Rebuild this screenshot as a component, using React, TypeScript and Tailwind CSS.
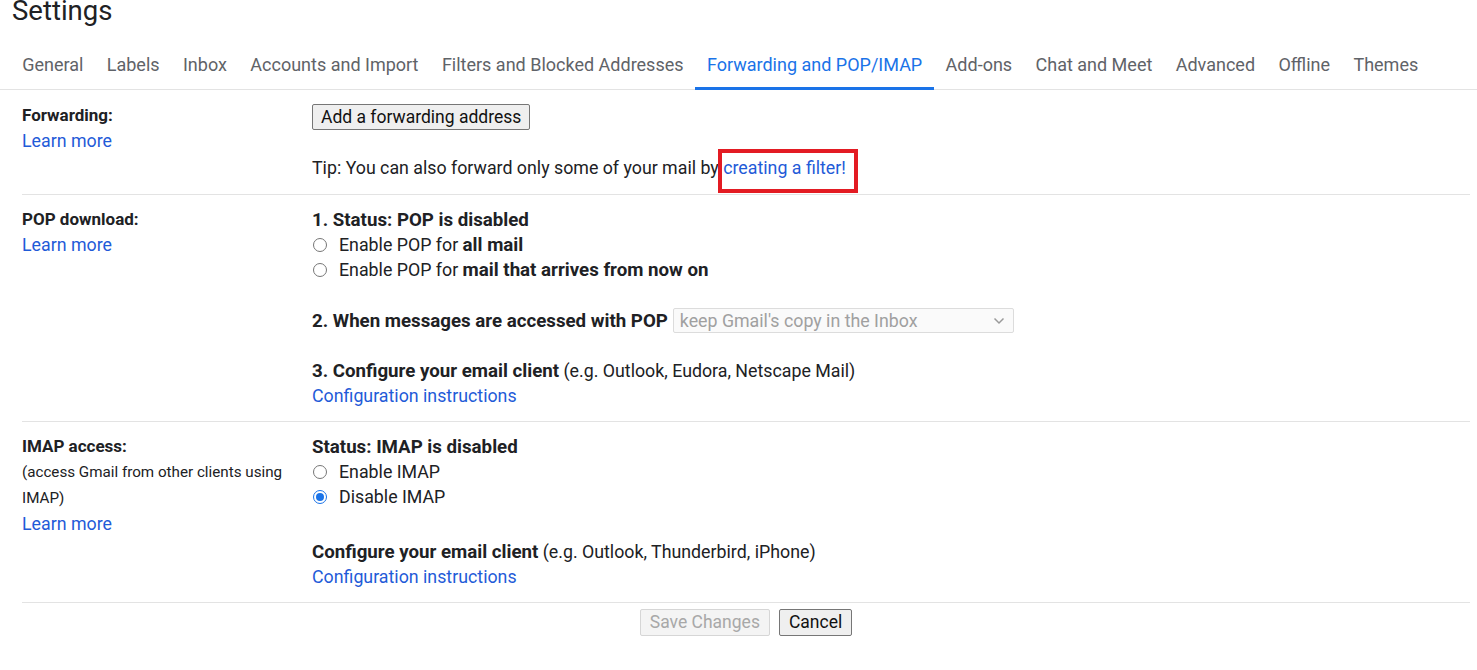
import React from "react";

const tabs = [
  "General",
  "Labels",
  "Inbox",
  "Accounts and Import",
  "Filters and Blocked Addresses",
  "Forwarding and POP/IMAP",
  "Add-ons",
  "Chat and Meet",
  "Advanced",
  "Offline",
  "Themes",
];

const Radio: React.FC<{ checked?: boolean }> = ({ checked }) =>
  checked ? (
    <span className="inline-flex items-center justify-center w-[14px] h-[14px] rounded-full border-[1.5px] border-[#1a73e8] mr-[12px] ml-[1px]">
      <span className="w-[8px] h-[8px] rounded-full bg-[#1a73e8]" />
    </span>
  ) : (
    <span className="inline-block w-[14px] h-[14px] rounded-full border border-[#767676] mr-[12px] ml-[1px]" />
  );

const Link: React.FC<{ children: React.ReactNode }> = ({ children }) => (
  <span className="text-[#1f5bd8] cursor-pointer">{children}</span>
);

// bold text inside the right column is a bit wider than the labels
const B: React.FC<{ children: React.ReactNode }> = ({ children }) => (
  <span className="font-bold text-[18.7px] leading-[18px]">{children}</span>
);

export default function App() {
  return (
    <div className="bg-white text-[#202124] font-['Roboto',sans-serif] text-[17.8px] leading-[25px] w-[1477px]">
      <div className="pl-[12px] text-[27.5px] leading-[21px] text-[#202124]">Settings</div>

      {/* tabs */}
      <div className="mt-[32px] flex pl-[10.5px] border-b border-[#e3e3e3]">
        {tabs.map((t) => {
          const active = t === "Forwarding and POP/IMAP";
          return (
            <div
              key={t}
              className={
                active
                  ? "px-[11.7px] pb-[10px] text-[18px] leading-[24px] text-[#1a73e8] border-b-[3px] border-[#1a73e8] -mb-[1px]"
                  : "px-[11.7px] pb-[10px] text-[18px] leading-[24px] text-[#5f6368] border-b-[3px] border-transparent -mb-[1px]"
              }
            >
              {t}
            </div>
          );
        })}
      </div>

      <div className="ml-[22px] mr-[7px]">
        {/* Forwarding */}
        <div className="flex pt-[13px] pb-[14px] border-b border-[#e3e3e3]">
          <div className="w-[290px] shrink-0">
            <div className="font-bold text-[17px] h-[25px]">Forwarding:</div>
            <Link>Learn more</Link>
          </div>
          <div>
            <button className="mt-[1px] h-[26px] px-[8px] leading-[24px] text-[17.5px] bg-[#efefef] border border-[#767676] rounded-[2px] text-[#111]">
              Add a forwarding address
            </button>
            <div className="mt-[25px] h-[25px]">
              Tip: You can also forward only some of your mail by{" "}
              <span className="relative inline-block leading-[25px] align-top">
                <Link>creating a filter!</Link>
                <span className="absolute left-[-5px] right-[-12px] top-[-6px] bottom-[-13px] border-[4px] border-[#e31b23]" />
              </span>
            </div>
          </div>
        </div>

        {/* POP */}
        <div className="flex pt-[12px] pb-[13px] border-b border-[#e3e3e3]">
          <div className="w-[290px] shrink-0">
            <div className="font-bold text-[17px] h-[25px]">POP download:</div>
            <Link>Learn more</Link>
          </div>
          <div>
            <div className="h-[25px]">
              <B>1. Status: POP is disabled</B>
            </div>
            <div className="flex items-center h-[25px]">
              <Radio />
              <span>
                Enable POP for <B>all mail</B>
              </span>
            </div>
            <div className="flex items-center h-[25px]">
              <Radio />
              <span>
                Enable POP for <B>mail that arrives from now on</B>
              </span>
            </div>
            <div className="mt-[26px] flex items-center h-[25px]">
              <B>2. When messages are accessed with POP</B>
              <div className="ml-[5px] w-[341px] h-[25px] border border-[#dcdcdc] rounded-[2px] bg-[#fafafa] flex items-center justify-between pl-[6px] pr-[8px] text-[#a0a0a0]">
                <span>keep Gmail's copy in the Inbox</span>
                <svg width="12" height="8" viewBox="0 0 12 8" fill="none">
                  <path d="M1.5 1.5 6 6l4.5-4.5" stroke="#9a9a9a" strokeWidth="1.5" />
                </svg>
              </div>
            </div>
            <div className="mt-[25px] h-[25px]">
              <B>3. Configure your email client</B> (e.g. Outlook, Eudora, Netscape Mail)
            </div>
            <Link>Configuration instructions</Link>
          </div>
        </div>

        {/* IMAP */}
        <div className="flex pt-[12px] pb-[13px] border-b border-[#e3e3e3]">
          <div className="w-[290px] shrink-0">
            <div className="font-bold text-[17px] h-[25px]">IMAP access:</div>
            <div className="text-[15.2px] leading-[25.5px] mt-[1px] pr-[6px]">
              (access Gmail from other clients using IMAP)
            </div>
            <Link>Learn more</Link>
          </div>
          <div>
            <div className="h-[25px]">
              <B>Status: IMAP is disabled</B>
            </div>
            <div className="flex items-center h-[25px]">
              <Radio />
              <span>Enable IMAP</span>
            </div>
            <div className="flex items-center h-[25px]">
              <Radio checked />
              <span>Disable IMAP</span>
            </div>
            <div className="mt-[30px] h-[25px]">
              <B>Configure your email client</B> (e.g. Outlook, Thunderbird, iPhone)
            </div>
            <Link>Configuration instructions</Link>
          </div>
        </div>

        {/* buttons */}
        <div className="flex justify-center gap-[9px] pt-[6px] pb-[30px]">
          <button className="h-[27px] px-[9px] leading-[25px] text-[17.5px] bg-[#f4f4f4] border border-[#d6d6d6] rounded-[2px] text-[#a8a8a8]">
            Save Changes
          </button>
          <button className="h-[27px] px-[9px] leading-[25px] text-[17.5px] bg-[#efefef] border border-[#767676] rounded-[2px] text-[#111]">
            Cancel
          </button>
        </div>
      </div>
    </div>
  );
}
